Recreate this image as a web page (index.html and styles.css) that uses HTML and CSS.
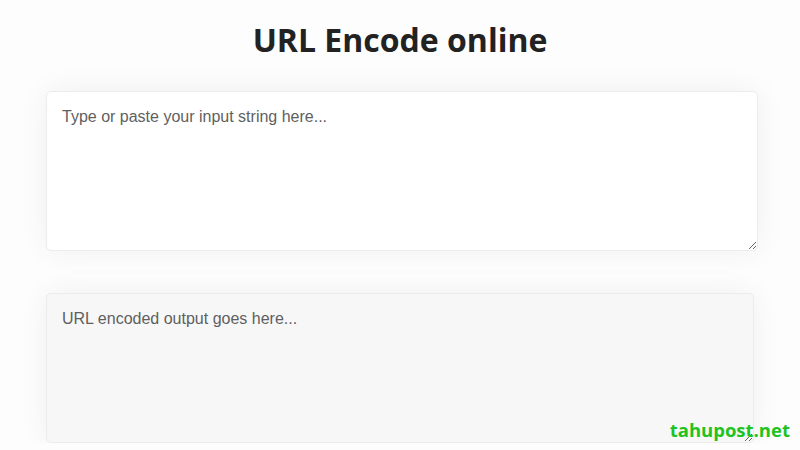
FILE: index.html
```html
<!DOCTYPE html>
<html lang="en">
<head>
    <meta charset="UTF-8">
    <meta name="viewport" content="width=device-width, initial-scale=1.0">
    <title>URL Encode online</title>
    <link rel="stylesheet" href="styles.css">
</head>
<body>
    <div class="container">
        <h1>URL Encode online</h1>
        <textarea id="input" class="input-box" placeholder="Type or paste your input string here..."></textarea>
        <textarea id="output" class="output-box" placeholder="URL encoded output goes here..." readonly></textarea>
    </div>
    <div class="watermark">tahupost.net</div>
</body>
</html>
```

FILE: styles.css
```css
body {
    margin: 0;
    background-color: #fdfdfd;
    font-family: "Liberation Sans", Arial, sans-serif;
    overflow: hidden;
}
.container {
    width: 712px;
    margin-left: 46px;
    display: flex;
    flex-direction: column;
}
h1 {
    font-family: "Open Sans", sans-serif;
    font-weight: 700;
    font-size: 32px;
    color: #222;
    text-align: center;
    margin: 20px -42px 31px -46px;
    line-height: 40px;
}
textarea {
    box-sizing: border-box;
    font-family: "Liberation Sans", Arial, sans-serif;
    font-size: 16px;
    line-height: 20px;
    padding: 15px;
    border: 1px solid #ececec;
    border-radius: 5px;
    box-shadow: 0 0 30px rgba(0, 0, 0, 0.06);
    color: #333;
    outline: none;
}
textarea::placeholder {
    color: #5f5f5f;
}
.input-box {
    width: 712px;
    height: 160px;
    background-color: #fff;
}
.output-box {
    width: 708px;
    height: 150px;
    margin-top: 42px;
    background-color: #f7f7f7;
}
.watermark {
    position: absolute;
    right: 10px;
    bottom: 8px;
    font-family: "Open Sans", sans-serif;
    font-weight: 700;
    font-size: 18.5px;
    color: #1fc31f;
}
```
